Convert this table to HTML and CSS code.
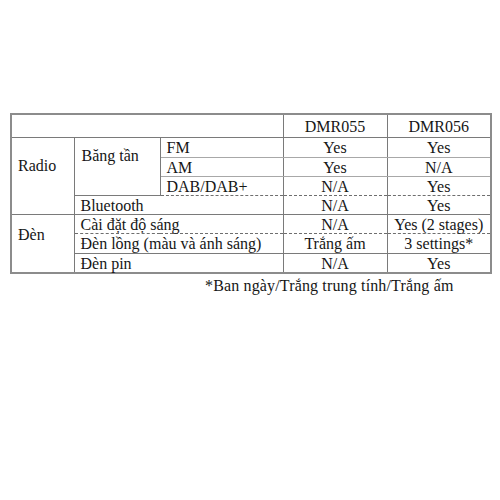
FILE: index.html
```html
<!DOCTYPE html>
<html lang="vi">
<head>
<meta charset="utf-8">
<link rel="stylesheet" href="styles.css">
</head>
<body>
<div class="page">
  <table class="spec">
    <colgroup>
      <col class="c1"><col class="c2"><col class="c3"><col class="c4"><col class="c5">
    </colgroup>
    <tr class="head">
      <td colspan="3"></td>
      <td class="center">DMR055</td>
      <td class="center">DMR056</td>
    </tr>
    <tr class="r-fm">
      <td rowspan="4" class="group radio">Radio</td>
      <td rowspan="3" class="band">Băng tần</td>
      <td class="sub">FM</td>
      <td class="center">Yes</td>
      <td class="center">Yes</td>
    </tr>
    <tr class="r-am">
      <td class="sub">AM</td>
      <td class="center">Yes</td>
      <td class="center">N/A</td>
    </tr>
    <tr class="r-dab">
      <td class="sub">DAB/DAB+</td>
      <td class="center">N/A</td>
      <td class="center">Yes</td>
    </tr>
    <tr class="r-bt dashed-top">
      <td colspan="2" class="sub">Bluetooth</td>
      <td class="center">N/A</td>
      <td class="center">Yes</td>
    </tr>
    <tr class="r-light group-top">
      <td rowspan="3" class="group den">Đèn</td>
      <td colspan="2" class="sub">Cài đặt độ sáng</td>
      <td class="center">N/A</td>
      <td class="center">Yes (2 stages)</td>
    </tr>
    <tr class="r-lantern dashed-top">
      <td colspan="2" class="sub">Đèn lồng (màu và ánh sáng)</td>
      <td class="center">Trắng ấm</td>
      <td class="center">3 settings*</td>
    </tr>
    <tr class="r-torch">
      <td colspan="2" class="sub">Đèn pin</td>
      <td class="center">N/A</td>
      <td class="center">Yes</td>
    </tr>
  </table>
  <p class="note">*Ban ngày/Trắng trung tính/Trắng ấm</p>
</div>
</body>
</html>
```

FILE: styles.css
```css
html, body {
  margin: 0;
  padding: 0;
  background: #ffffff;
}

body {
  font-family: "Liberation Serif", "Times New Roman", serif;
  font-size: 16px;
  color: #161616;
}

.page {
  padding: 113px 10px 0 10px;
}

.spec {
  border-collapse: collapse;
  table-layout: fixed;
  width: 480px;
  border: 2px solid #8c8c8c;
}

.c1 { width: 63px; }
.c2 { width: 86px; }
.c3 { width: 123px; }
.c4 { width: 104px; }
.c5 { width: 104px; }

.spec td {
  border: 1px solid #7a7a7a;
  padding: 0 0 0 6px;
  line-height: 17px;
  white-space: nowrap;
  overflow: visible;
}

.spec td.center {
  text-align: center;
  padding: 0;
}

.head td {
  height: 22px;
  border-bottom: 1px solid #7a7a7a;
}

.r-fm td, .r-am td, .r-dab td, .r-bt td, .r-light td, .r-torch td {
  height: 18px;
}

.r-fm td {
  height: 19px;
}

.r-lantern td {
  height: 19px;
}

.r-fm td.sub, .r-am td.sub, .r-fm td.center, .r-am td.center {
  border-bottom-color: #a8a8a8;
}

.dashed-top td {
  border-top: 1px dashed #6e6e6e;
}

.r-dab td.sub, .r-dab td.center {
  border-bottom: 1px dashed #6e6e6e;
}

.r-light td.sub, .r-light td.center {
  border-bottom: 1px dashed #6e6e6e;
}

.group-top td {
  border-top: 1px solid #7a7a7a;
}

.group {
  vertical-align: top;
  padding-left: 7px;
}

.radio {
  padding-top: 19px !important;
}

.den {
  padding-top: 11px !important;
}

.band {
  vertical-align: top;
  padding-top: 9px !important;
  padding-left: 7px !important;
}

.note {
  margin: 3px 0 0 0;
  padding-left: 195px;
  line-height: 18px;
  letter-spacing: 0.15px;
}
```
